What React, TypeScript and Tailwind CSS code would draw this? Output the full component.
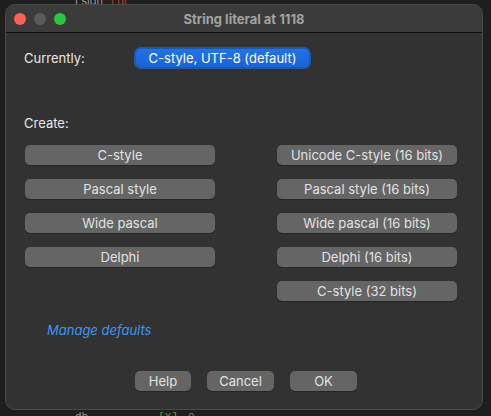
import React from 'react';

const leftButtons = ['C-style', 'Pascal style', 'Wide pascal', 'Delphi'];
const rightButtons = [
  'Unicode C-style (16 bits)',
  'Pascal style (16 bits)',
  'Wide pascal (16 bits)',
  'Delphi (16 bits)',
  'C-style (32 bits)',
];

const MacButton: React.FC<{ label: string; className?: string }> = ({ label, className = '' }) => (
  <button
    className={`block h-[20px] rounded-[5px] bg-[#656565] text-[13px] leading-[20px] text-[#e2e2e2] shadow-[0_1px_0_rgba(0,0,0,0.25)] ${className}`}
  >
    {label}
  </button>
);

export default function App() {
  return (
    <div
      className="h-[416px] w-[491px] overflow-hidden bg-[#1e1e1e]"
      style={{ fontFamily: 'Inter, "Liberation Sans", sans-serif' }}
    >
      {/* editor text peeking above */}
      <div className="flex h-[4px] items-end overflow-hidden pl-[75px] text-[11px] leading-[6px]">
        <span className="text-[#9a9a9a]">Lsign</span>
        <span className="ml-[8px] text-[#c0392b]">Ldi</span>
      </div>

      <div className="ml-[5px] flex h-[406px] w-[478px] flex-col overflow-hidden rounded-[10px] border border-[#4a4a4a] bg-[#323232]">
        {/* Title bar */}
        <div className="relative flex h-[28px] shrink-0 items-center border-b border-[#111] bg-[#3a3b3a] px-[8px]">
          <div className="flex gap-[8px]">
            <span className="h-[12px] w-[12px] rounded-full bg-[#fe5f57]" />
            <span className="h-[12px] w-[12px] rounded-full bg-[#5b5b5b]" />
            <span className="h-[12px] w-[12px] rounded-full bg-[#28c840]" />
          </div>
          <div className="absolute inset-x-0 text-center text-[13px] font-bold leading-[16px] text-[#a3a3a3]">
            String literal at 1118
          </div>
        </div>

        {/* Body */}
        <div className="flex flex-1 flex-col pl-[18px]">
          <div className="mt-[14px] flex h-[22px] items-center">
            <span className="w-[110px] text-[13px] leading-[16px] text-[#e8e8e8]">Currently:</span>
            <div className="flex rounded-[7px] bg-[#1d5aa8] p-[2px]">
              <button className="block h-[18px] w-[173px] rounded-[5px] bg-gradient-to-b from-[#2273e6] to-[#1b63d6] text-[13px] leading-[18px] text-white">
                C-style, UTF-8 (default)
              </button>
            </div>
          </div>

          <div className="mt-[46px] text-[13px] leading-[16px] text-[#e8e8e8]">Create:</div>

          <div className="mt-[14px] flex">
            <div className="flex w-[191px] flex-col gap-[14px] pl-[1px]">
              {leftButtons.map((b) => (
                <MacButton key={b} label={b} className="w-[190px]" />
              ))}
            </div>
            <div className="ml-[62px] flex w-[180px] flex-col gap-[14px]">
              {rightButtons.map((b) => (
                <MacButton key={b} label={b} className="w-[180px]" />
              ))}
            </div>
          </div>

          <div className="mt-[21px] pl-[23px] text-[13px] italic leading-[16px] text-[#3d96f2]">Manage defaults</div>

          <div className="mt-[33px] flex pl-[111px]">
            <MacButton label="Help" className="w-[56px]" />
            <MacButton label="Cancel" className="ml-[16px] w-[67px]" />
            <MacButton label="OK" className="ml-[16px] w-[67px]" />
          </div>
        </div>
      </div>

      <div className="flex h-[6px] items-start overflow-hidden pl-[75px] font-mono text-[11px] leading-[14px]">
        <span className="text-[#9a9a9a]">db</span>
        <span className="ml-[70px] text-[#5aa02c]">[X]</span>
        <span className="ml-[10px] text-[#5aa02c]">0</span>
      </div>
    </div>
  );
}
